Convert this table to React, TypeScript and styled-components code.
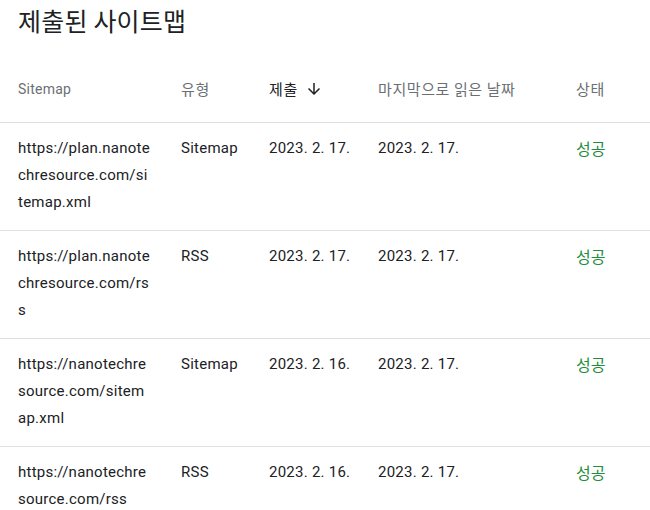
import React from "react";
import styled, { createGlobalStyle } from "styled-components";

const Global = createGlobalStyle`
  html, body { margin: 0; padding: 0; background: #fff; }
  body { font-family: Roboto, "Noto Sans CJK KR", sans-serif; color: #202124; overflow: hidden; }
`;

const Page = styled.div`
  width: 650px;
`;

const Title = styled.h1`
  margin: 0;
  padding: 4px 18px 0;
  font-family: "Noto Sans CJK KR", sans-serif;
  font-size: 25px;
  letter-spacing: 0.2px;
  line-height: 32px;
  font-weight: 400;
  color: #202124;
`;

const COLS = "163px 88px 109px 198px 1fr";

const HeaderRow = styled.div`
  display: grid;
  grid-template-columns: ${COLS};
  padding: 43px 0 23px 18px;
  border-bottom: 1px solid #e0e0e0;
`;

const HeadCell = styled.div<{ $active?: boolean; $ko?: boolean }>`
  display: flex;
  align-items: center;
  gap: 7px;
  font-family: ${(p) => (p.$ko ? `"Noto Sans CJK KR", sans-serif` : `Roboto, sans-serif`)};
  font-size: ${(p) => (p.$ko ? "15px" : "14px")};
  letter-spacing: ${(p) => (p.$ko ? "0.6px" : "0.25px")};
  line-height: 20px;
  color: ${(p) => (p.$active ? "#202124" : "#6b6f74")};
`;

const Row = styled.div`
  display: grid;
  grid-template-columns: ${COLS};
  padding: 12px 0 14px 18px;
  border-bottom: 1px solid #e0e0e0;
`;

const Cell = styled.div`
  font-family: Roboto, "Noto Sans CJK KR", sans-serif;
  font-size: 15px;
  letter-spacing: 0.25px;
  line-height: 27px;
  color: #202124;
`;

const StatusCell = styled.div`
  font-family: "Noto Sans CJK KR", sans-serif;
  font-size: 16px;
  line-height: 26px;
  color: #1e8e3e;
`;

const UrlCell = styled(Cell)`
  padding-right: 30px;
  word-break: break-all;
`;

const ArrowDown = () => (
  <svg width="18" height="18" viewBox="0 0 24 24" fill="#202124">
    <path d="M20 12l-1.41-1.41L13 16.17V4h-2v12.17l-5.58-5.59L4 12l8 8 8-8z" />
  </svg>
);

const rows = [
  { url: "https://plan.nanotechresource.com/sitemap.xml", type: "Sitemap", submitted: "2023. 2. 17.", read: "2023. 2. 17." },
  { url: "https://plan.nanotechresource.com/rss", type: "RSS", submitted: "2023. 2. 17.", read: "2023. 2. 17." },
  { url: "https://nanotechresource.com/sitemap.xml", type: "Sitemap", submitted: "2023. 2. 16.", read: "2023. 2. 17." },
  { url: "https://nanotechresource.com/rss", type: "RSS", submitted: "2023. 2. 16.", read: "2023. 2. 17." },
];

export default function App() {
  return (
    <Page>
      <Global />
      <Title>제출된 사이트맵</Title>
      <HeaderRow>
        <HeadCell>Sitemap</HeadCell>
        <HeadCell $ko>유형</HeadCell>
        <HeadCell $ko $active>
          제출
          <ArrowDown />
        </HeadCell>
        <HeadCell $ko>마지막으로 읽은 날짜</HeadCell>
        <HeadCell $ko>상태</HeadCell>
      </HeaderRow>
      {rows.map((r) => (
        <Row key={r.url}>
          <UrlCell>{r.url}</UrlCell>
          <Cell>{r.type}</Cell>
          <Cell>{r.submitted}</Cell>
          <Cell>{r.read}</Cell>
          <StatusCell>성공</StatusCell>
        </Row>
      ))}
    </Page>
  );
}
